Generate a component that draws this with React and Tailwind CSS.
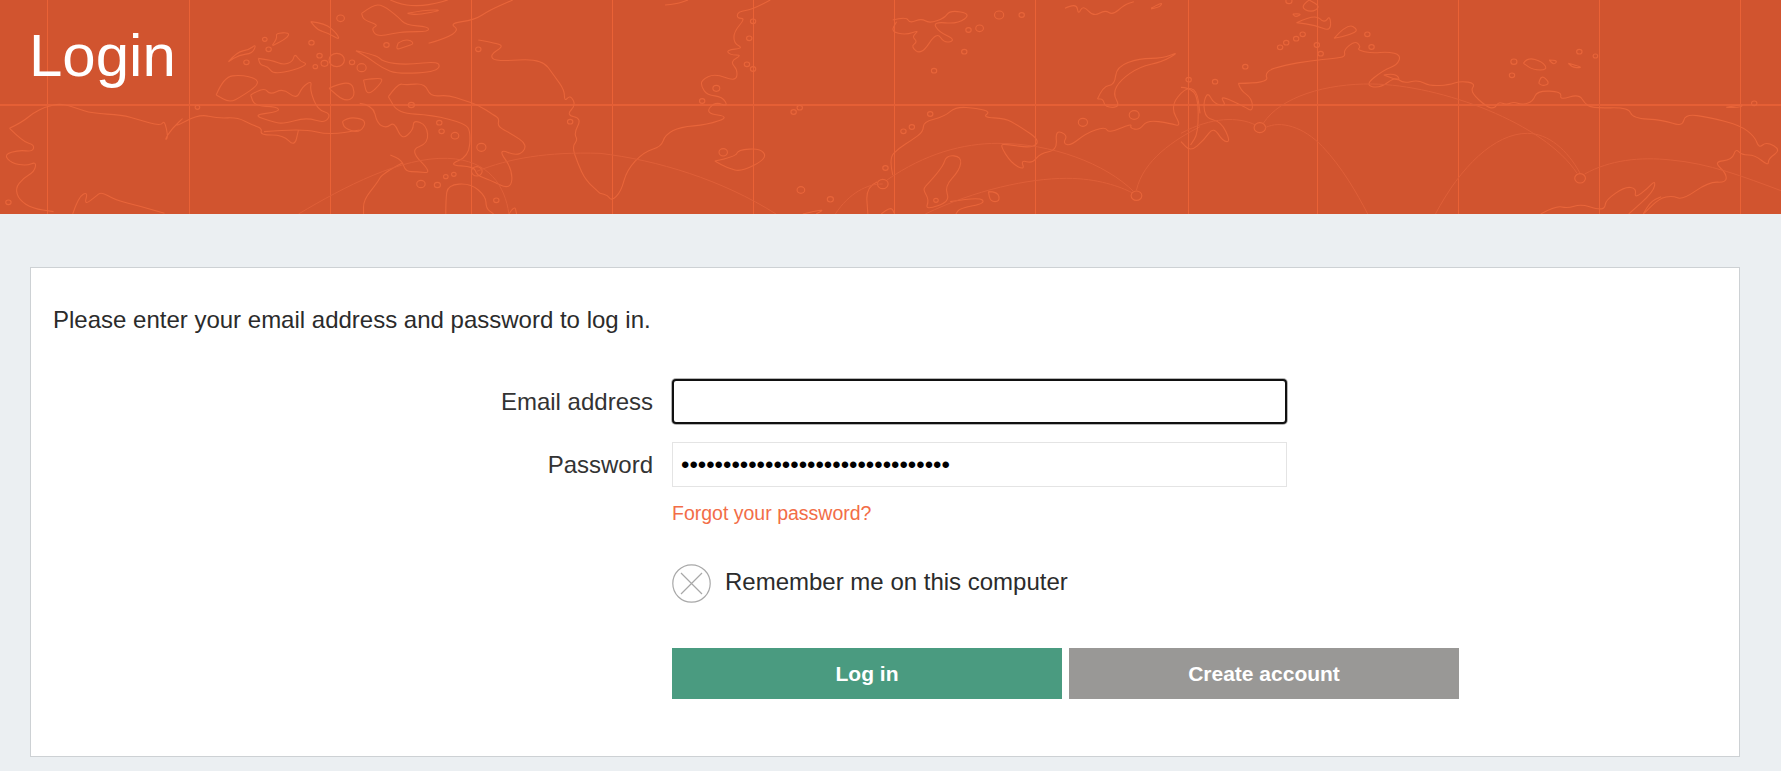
const smooth = (pts) => {
  // quadratic smoothing through midpoints, good enough for coastlines
  let d = `M${pts[0][0]} ${pts[0][1]}`;
  for (let i = 1; i < pts.length - 1; i++) {
    const mx = (pts[i][0] + pts[i + 1][0]) / 2;
    const my = (pts[i][1] + pts[i + 1][1]) / 2;
    d += ` Q${pts[i][0]} ${pts[i][1]} ${mx} ${my}`;
  }
  const last = pts[pts.length - 1];
  d += ` L${last[0]} ${last[1]}`;
  return d;
};

const gridX = [47, 189, 330, 471, 612, 753, 894, 1035, 1188, 1317, 1458, 1599, 1740];

const mapParts = [
  {
    dx: 0,
    coasts: [
      [[25,385],[60,365],[85,340],[120,320],[160,310],[200,325],[240,340],[320,345],[360,358],[420,378],[430,360],[440,415],[430,420],[450,385],[485,347],[450,385],[520,342],[570,355],[620,352],[660,375],[685,385],[680,405],[740,405],[770,440],[780,390]],
      [[25,385],[60,425],[90,435],[85,455],[50,450],[10,463],[30,490],[70,497],[95,485],[90,515],[60,535],[40,565],[50,600],[85,625],[140,635]],
      [[597,185],[620,155],[650,150],[670,132],[660,160],[625,165],[597,185]],
      [[712,135],[725,115],[720,100],[757,97],[750,115],[712,137]],
      [[812,65],[850,70],[880,100],[888,120],[860,100],[830,90],[812,65]],
      [[675,175],[710,180],[740,195],[765,185],[770,160],[785,185],[805,192],[770,210],[715,222],[700,200],[680,195],[675,175]],
      [[930,152],[985,165],[1000,185],[1060,195],[1150,183],[1145,215],[1040,222],[1000,205],[965,175],[930,152]],
      [[945,40],[975,15],[1000,15],[1040,50],[1060,75],[1120,80],[1120,95],[1060,95],[1030,100],[985,110],[970,85],[990,75],[950,60],[945,40]],
      [[1020,0],[1050,15],[1100,18],[1140,10],[1170,0]],
      [[1065,40],[1110,30],[1160,30],[1090,45],[1065,40]],
      [[1040,130],[1060,115],[1085,130],[1060,140],[1035,150],[1040,130]],
      [[1120,130],[1165,115],[1200,90],[1175,70],[1240,60],[1280,30],[1340,0]],
      [[1250,120],[1300,130],[1315,140],[1280,165],[1295,185],[1415,175],[1450,230],[1475,270],[1475,305],[1490,285],[1505,315],[1480,345],[1520,355],[1500,400],[1510,420],[1495,440],[1510,490],[1530,540],[1568,580]],
      [[565,285],[585,230],[630,225],[670,235],[675,255],[630,290],[600,308],[565,285]],
      [[655,285],[690,260],[705,285],[740,265],[775,298],[790,260],[815,242],[810,270],[830,330],[865,340],[850,370],[800,352],[740,372],[710,365],[660,345],[730,335],[725,320],[665,318],[655,285]],
      [[860,265],[915,235],[930,290],[900,305],[860,265]],
      [[950,240],[995,232],[1000,245],[960,290],[950,240]],
      [[1015,290],[1040,250],[1060,255],[1110,250],[1125,290],[1170,285],[1210,300],[1250,315],[1290,345],[1305,355],[1300,380],[1335,400],[1380,435],[1355,470],[1300,445],[1340,510],[1335,570],[1280,540],[1245,525],[1240,500],[1170,495],[1225,470],[1230,395],[1215,370],[1130,345],[1040,340],[1015,290]],
      [[940,310],[975,315],[985,370],[1010,385],[1030,365],[1050,420],[1080,390],[1080,360],[1115,375],[1120,430],[1070,450],[1130,520],[1090,515],[1060,515],[1050,480],[1020,465]],
      [[895,365],[910,350],[960,360],[940,400],[900,385],[895,365]],
      [[690,395],[790,385],[860,405],[940,390]],
      [[1050,490],[1000,520],[985,550],[950,600],[950,642]],
      [[1165,642],[1165,600],[1170,555],[1230,550],[1270,590],[1270,625],[1290,642]],
      [[1330,642],[1345,615],[1350,642]],
      [[190,642],[205,590],[230,575],[220,615],[250,590],[265,575],[300,600],[370,620],[430,640]],
    ],
    dots: [[890,55,10],[692,118,6],[702,148,7],[644,187,7],[814,128,7],[835,167,7],[848,190,9],[880,180,20],[920,187,7],[945,203,12],[824,200,6],[1010,135,7],[1250,148,7],[516,322,6],[1148,368,7],[1154,394,7],[1189,407,10],[1490,365,7],[1258,442,12],[1246,514,14],[1165,530,6],[1186,523,6],[1143,555,8],[1100,552,11],[1297,601,7],[22,607,7],[1075,315,8]],
    arcs: ["M780 642C900 560 1050 470 1170 475C1280 480 1320 560 1330 642", "M1246 514C1330 475 1430 455 1568 460"],
  },
  {
    dx: 600,
    coasts: [
      [[170,15],[200,12],[230,0]],
      [[445,0],[400,28],[360,35],[358,55],[380,55],[350,95],[350,130],[375,145],[330,150],[340,165],[372,165],[340,185],[360,210],[355,245],[300,220],[265,240],[265,260],[280,285],[320,290],[335,320],[300,305],[275,340],[340,350],[280,375],[210,380],[170,405],[160,440],[115,455],[70,510],[55,575],[30,603],[20,585],[0,580]],
      [[300,483],[355,470],[360,450],[420,445],[437,475],[370,515],[335,505],[300,483]],
      [[765,60],[800,50],[810,70],[840,55],[860,70],[900,55],[915,30],[970,42],[935,72],[870,65],[885,95],[930,120],[900,130],[880,95],[840,165],[812,140],[830,125],[815,110],[835,90],[800,105],[760,95],[775,65]],
      [[1215,25],[1245,8],[1250,45],[1262,15],[1290,50],[1320,30],[1340,45],[1370,15],[1395,5]],
      [[1440,25],[1470,5],[1465,20],[1440,27]],
      [[1300,297],[1315,258],[1345,255],[1350,200],[1410,175],[1470,175],[1515,155],[1470,185],[1410,200],[1360,240],[1340,280],[1360,322],[1320,322],[1315,297],[1300,297]],
      [[765,525],[755,475],[780,445],[815,420],[845,395],[845,365],[900,350],[930,320],[985,325],[1020,335],[1000,352],[1060,355],[1090,375],[1150,420],[1130,445],[1060,432],[1045,435],[1075,490],[1110,510],[1100,480],[1130,490],[1150,460],[1195,450],[1190,390],[1222,405],[1210,430],[1230,437],[1270,400],[1320,380],[1330,400],[1390,370],[1385,385],[1410,390],[1430,360],[1490,370],[1520,380],[1490,320],[1530,262],[1560,270],[1568,340]],
      [[725,545],[695,560],[700,642]],
      [[850,560],[895,505],[905,465],[945,470],[940,510],[900,560],[915,605],[850,630],[860,600],[845,570],[850,560]],
      [[915,605],[990,590],[1008,610],[940,625],[930,642]],
      [[1015,575],[1040,575],[1045,605],[1020,605],[1015,575]],
      [[530,642],[590,625],[565,642]],
      [[735,642],[760,618],[770,642]],
    ],
    dots: [[400,64,7],[390,115,7],[384,193,7],[400,207,7],[267,303,7],[506,336,7],[522,323,7],[304,265,9],[322,457,11],[963,90,7],[992,85,10],[952,155,7],[873,212,7],[1043,45,12],[1102,45,7],[746,504,7],[793,394,7],[815,381,7],[863,342,7],[1262,367,12],[1396,345,13],[878,601,6],[602,598,8],[525,570,10],[739,552,14],[1402,587,14]],
    arcs: ["M0 460C150 480 320 540 460 642", "M615 642C650 580 700 550 739 552", "M750 540C850 460 950 430 1040 430C1180 430 1320 490 1395 575", "M850 642C980 570 1120 535 1220 535C1300 535 1360 560 1390 578", "M1402 570C1420 480 1500 420 1568 380"],
  },
  {
    dx: 1181,
    coasts: [
      [[335,0],[310,20],[340,38],[365,20],[335,0]],
      [[292,42],[318,40],[300,52],[292,42]],
      [[302,68],[350,42],[375,70],[390,45],[392,95],[350,75],[302,68]],
      [[400,115],[435,70],[465,90],[440,105],[400,115]],
      [[150,250],[230,250],[218,215],[270,195],[340,182],[400,175],[430,170],[425,150],[455,122],[470,140],[460,150],[500,160],[540,155],[575,165],[565,195],[530,210],[480,255],[520,265],[560,230],[580,250],[620,240],[650,258],[700,255],[730,243],[770,250],[755,275],[800,322],[820,325],[830,305],[850,315],[870,305],[890,315],[920,305],[930,272],[995,275],[990,300],[1040,282],[1055,310],[1075,325],[1170,322],[1180,355],[1260,360],[1310,380],[1318,342],[1380,352],[1460,375],[1500,410],[1510,445],[1530,425],[1568,450],[1535,475],[1535,498],[1500,465],[1465,465],[1450,445],[1440,480],[1392,485],[1425,520],[1425,548],[1380,545],[1310,600],[1285,587],[1250,595],[1210,640]],
      [[150,250],[155,270],[185,295],[188,335],[165,320],[100,285],[120,320],[85,310],[70,275],[58,310],[65,355],[105,365],[130,425],[110,425],[85,380],[60,420],[25,455],[0,425]],
      [[0,262],[20,262],[45,290],[45,400],[25,435]],
      [[530,225],[560,218],[575,245],[530,225]],
      [[895,190],[905,172],[945,185],[958,210],[920,210],[895,190]],
      [[962,180],[985,180],[975,195],[962,180]],
      [[1012,190],[1055,203],[1025,203],[1012,190]],
      [[935,250],[940,222],[965,250],[945,258],[935,250]],
      [[1425,322],[1468,312],[1465,322],[1425,322]],
      [[940,642],[980,617],[1010,625],[1045,612],[1090,628],[1108,625],[1110,600],[1160,560],[1190,565],[1185,595],[1220,565],[1240,540],[1235,575],[1170,642]],
      [[1208,642],[1225,605],[1255,590]],
    ],
    dots: [[282,3,8],[487,103,7],[318,103,7],[301,116,7],[275,128,7],[259,142,7],[355,135,7],[365,161,7],[498,141,7],[168,200,7],[20,239,7],[89,245,7],[206,383,15],[1043,535,14],[870,185,8],[865,226,7],[1041,155,7],[1083,168,6],[1498,310,7]],
    arcs: ["M215 370C260 290 380 250 500 252C680 255 950 370 1035 520", "M220 383C260 360 320 380 370 440C420 500 460 580 488 642", "M665 642C730 500 820 400 905 400C960 400 1010 450 1043 520", "M1055 522C1120 480 1200 470 1280 480C1380 490 1470 530 1568 572", "M195 375C150 350 80 350 0 400"],
  },
];

function WorldMap() {
  return (
    <svg viewBox="0 0 1781 214" className="absolute inset-0 w-full h-full" fill="none">
      {gridX.map((x) => (
        <line key={x} x1={x + 0.5} y1="0" x2={x + 0.5} y2="214" stroke="#ea6236" strokeWidth="1" />
      ))}
      <line x1="0" y1="105" x2="1781" y2="105" stroke="#e55f35" strokeWidth="2" />
      {mapParts.map((part) => (
        <g key={part.dx} transform={`translate(${part.dx} 0) scale(${600 / 1568} ${1 / 3})`}>
          {part.coasts.map((pts, i) => (
            <path key={i} d={smooth(pts)} stroke="#e8653a" strokeWidth="1.1" vectorEffect="non-scaling-stroke" />
          ))}
          {part.dots.map(([x, y, r], i) => (
            <ellipse key={i} cx={x} cy={y} rx={r} ry={r} stroke="#e8653a" strokeWidth="1.1" vectorEffect="non-scaling-stroke" />
          ))}
          {part.arcs.map((d, i) => (
            <path key={i} d={d} stroke="#df5f38" strokeWidth="1" vectorEffect="non-scaling-stroke" />
          ))}
        </g>
      ))}
    </svg>
  );
}

export default function App() {
  return (
    <div className="min-h-[771px] bg-[#ebeff2] font-['Liberation_Sans',Arial,sans-serif] text-[#2b2b2b]">
      {/* Header */}
      <header className="relative h-[214px] overflow-hidden bg-[#d1542f]">
        <WorldMap />
        <h1 className="relative pl-[29px] pt-[21px] text-[60px] leading-[70px] text-white">Login</h1>
      </header>

      {/* Card */}
      <main className="mx-[30px] mt-[53px] h-[490px] w-[1710px] border border-[#cdd1d4] bg-white pl-[22px] pt-[36px]">
        <p className="text-[24px] leading-[32px]">Please enter your email address and password to log in.</p>

        <div className="mt-[43px] flex items-center">
          <label className="mr-[19px] w-[600px] text-right text-[24px] text-[#333]">Email address</label>
          <input
            type="text"
            readOnly
            className="h-[45px] w-[615px] rounded-[4px] border-2 border-[#111] bg-white px-2 shadow-[0_0_0_1px_#b5b5b5] outline-none"
          />
        </div>

        <div className="mt-[18px] flex items-center">
          <label className="mr-[19px] w-[600px] text-right text-[24px] text-[#333]">Password</label>
          <input
            type="password"
            readOnly
            value="12345678901234567890123456789012"
            className="h-[45px] w-[615px] border border-[#e4e4e4] bg-white pl-[8px] pr-[9px] text-[24px] text-black outline-none"
          />
        </div>

        <div className="ml-[619px] mt-[14px] text-[19.5px] leading-6 text-[#f26d47]">Forgot your password?</div>

        <div className="ml-[619px] mt-[39px] flex items-center gap-[14px]">
          <svg width="39" height="39" viewBox="0 0 39 39" fill="none" stroke="#a8a8a8" strokeWidth="1.2">
            <circle cx="19.5" cy="19.5" r="18.7" />
            <path d="M9 9 L30 30 M30 9 L9 30" />
          </svg>
          <span className="pb-[3px] text-[24px]">Remember me on this computer</span>
        </div>

        <div className="ml-[619px] mt-[45px] flex gap-[7px]">
          <button className="h-[51px] w-[390px] bg-[#4a9b80] text-[21px] font-bold text-white">Log in</button>
          <button className="h-[51px] w-[390px] bg-[#999896] text-[21px] font-bold text-white">Create account</button>
        </div>
      </main>
    </div>
  );
}
